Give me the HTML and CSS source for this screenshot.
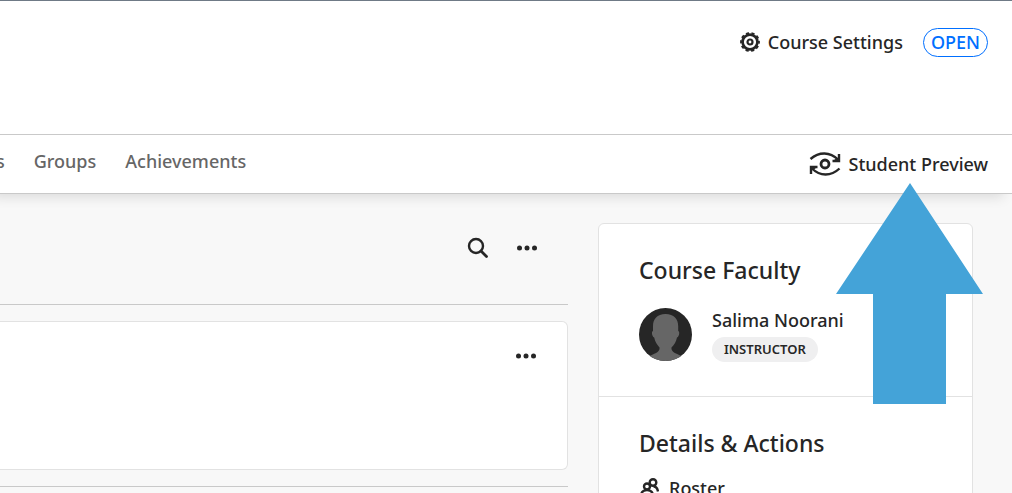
FILE: index.html
```html
<!DOCTYPE html>
<html lang="en">
<head>
<meta charset="utf-8">
<meta name="viewport" content="width=device-width, initial-scale=1">
<title>Course</title>
<link rel="stylesheet" href="styles.css">
</head>
<body>
<header class="course-header">
  <button class="action" type="button">
    <svg class="gear" viewBox="0 0 20 20" aria-hidden="true">
      <circle cx="10" cy="10" r="7.4" fill="none" stroke="currentColor" stroke-width="2.600"/>
      <circle cx="10" cy="10" r="9" fill="none" stroke="currentColor" stroke-width="1.800" stroke-dasharray="3.200 2.455" stroke-dashoffset="1.600"/>
      <circle cx="10" cy="10" r="2.500" fill="none" stroke="currentColor" stroke-width="2.200"/>
    </svg>
    Course Settings
  </button>
  <button class="status" type="button">OPEN</button>
</header>
<div class="course-bar">
  <nav class="tabs">
    <a class="tab" href="#">s</a>
    <a class="tab" href="#">Groups</a>
    <a class="tab" href="#">Achievements</a>
  </nav>
  <button class="action preview" type="button">
    <svg class="preview-icon" viewBox="0 0 32 24" fill="none" stroke="currentColor" stroke-width="2.400" aria-hidden="true">
      <path d="M1.500 7C10 -.500 21 -.500 29 7.500M30.500 16.500C22 24.500 11 24.500 3 16.500"/>
      <path d="M30 2v7h-6.500M2 22v-7h6.500"/>
      <path d="M25 8.500l5-3v3zM7 15.500l-5 3v-3z" fill="currentColor" stroke-width="1"/>
      <circle cx="16" cy="12" r="4" stroke-width="2.800"/>
    </svg>
    Student Preview
  </button>
</div>
<main class="course-body">
  <section class="content">
    <div class="toolbar">
      <button class="icon-button" type="button" aria-label="Search">
        <svg class="search" viewBox="0 0 22 22" fill="none" stroke="currentColor" aria-hidden="true">
          <circle cx="9" cy="9" r="7" stroke-width="2.400"/>
          <path d="M14 14l5.500 5.500" stroke-width="2.800" stroke-linecap="round"/>
        </svg>
      </button>
      <button class="icon-button" type="button" aria-label="More options">
        <svg class="dots" viewBox="0 0 20 6" fill="currentColor" aria-hidden="true"><circle cx="2.500" cy="3" r="2.500"/><circle cx="10" cy="3" r="2.500"/><circle cx="17.500" cy="3" r="2.500"/></svg>
      </button>
    </div>
    <article class="item">
      <button class="icon-button" type="button" aria-label="Item options">
        <svg class="dots" viewBox="0 0 20 6" fill="currentColor" aria-hidden="true"><circle cx="2.500" cy="3" r="2.500"/><circle cx="10" cy="3" r="2.500"/><circle cx="17.500" cy="3" r="2.500"/></svg>
      </button>
    </article>
    <hr class="rule">
  </section>
  <aside class="side">
    <section class="side-section">
      <h2 class="side-title">Course Faculty</h2>
      <div class="person">
        <svg class="avatar" viewBox="0 0 53 53" aria-hidden="true">
          <clipPath id="round"><circle cx="26.500" cy="26.500" r="26.500"/></clipPath>
          <g clip-path="url(#round)">
            <path d="M0 0h53v53H0z" fill="#262626"/>
            <path d="M26.500 6C18 6 14 11 14 18v5c-2 .5-.8 6 1.200 6.500C16 34 18 36.500 20.500 39.500c.5 4-3 5.500-10 8.500v8h32v-8c-7-3-10.500-4.500-10-8.500C35.500 36.500 37 34 38 29.500c2-.5 3.200-6 1.200-6.500v-5c0-7-4.200-12-12.700-12z" fill="#666"/>
          </g>
        </svg>
        <div class="person-info">
          <span class="name">Salima Noorani</span>
          <span class="role">INSTRUCTOR</span>
        </div>
      </div>
    </section>
    <section class="side-section">
      <h2 class="side-title">Details &amp; Actions</h2>
      <a class="detail" href="#">
        <svg class="people" viewBox="0 0 20 20" fill="none" stroke="currentColor" stroke-width="2.400" aria-hidden="true">
          <circle cx="8" cy="8.500" r="3"/><circle cx="14" cy="4.500" r="3.300"/>
          <path d="M2 18c0-8 12-8 12 0zM14.500 8.500c3 0 4 2 4.500 5"/>
        </svg>
        Roster
      </a>
    </section>
  </aside>
</main>
<svg class="pointer" viewBox="0 0 147 221" aria-hidden="true"><path d="M74 0l73 111h-37v110H37V111H0z" fill="#44a3d8"/></svg>
</body>
</html>
```
FILE: styles.css
```css
* { box-sizing: border-box; }
body {
  margin: 0;
  height: 100vh;
  overflow: hidden;
  position: relative;
  background: #f8f8f8;
  color: #262626;
  font: 500 18px/24px "Noto Sans", "Open Sans", sans-serif;
}
button {
  margin: 0;
  padding: 0;
  border: 0;
  background: none;
  color: inherit;
  font: inherit;
  cursor: pointer;
}
a { color: inherit; text-decoration: none; }
svg { display: block; flex: none; }
.course-header {
  display: flex;
  justify-content: flex-end;
  align-items: flex-start;
  gap: 20px;
  padding: 27px 24px 77px;
  border-top: 1px solid #6f7a86;
  border-bottom: 1px solid #c9c9c9;
  background: #fff;
}
.action {
  display: flex;
  align-items: center;
  gap: 8px;
  padding: 2px 0;
}
.gear { width: 20px; height: 20px; }
.status {
  padding: 2px 7px;
  border: 1px solid #006fff;
  border-radius: 16px;
  color: #006fff;
  line-height: 23px;
}
.course-bar {
  position: relative;
  display: flex;
  justify-content: space-between;
  align-items: center;
  padding: 14px 24px 14px 0;
  border-bottom: 1px solid #c9c9c9;
  background: #fff;
  box-shadow: -8px 3px 12px rgba(0, 0, 0, .12);
  clip-path: inset(0 0 -20px 0);
}
.tabs { display: flex; gap: 29px; padding-bottom: 6px; margin-left: -4px; }
.tab { color: #666; }
.preview-icon { width: 32px; height: 24px; }
.course-body {
  display: grid;
  grid-template-columns: minmax(0, 1fr) 375px;
  gap: 30px;
  padding: 0 39px 0 0;
}
.toolbar {
  display: flex;
  justify-content: flex-end;
  align-items: center;
  gap: 28px;
  padding: 43px 31px 45px 0;
  border-bottom: 1px solid #c9c9c9;
}
.search { width: 22px; height: 22px; }
.dots { width: 20px; height: 6px; }
.item {
  display: flex;
  justify-content: flex-end;
  align-items: flex-start;
  min-height: 149px;
  margin-top: 16px;
  padding: 31px 31px 0 0;
  border: 1px solid #e2e2e2;
  border-left: 0;
  border-radius: 0 6px 6px 0;
  background: #fff;
}
.rule { margin: 16px 0; border: 0; border-top: 1px solid #c9c9c9; }
.side {
  margin-top: 29px;
  border: 1px solid #e2e2e2;
  border-radius: 6px;
  background: #fff;
}
.side-section { padding: 30px 40px 34px; }
.side-section + .side-section { border-top: 1px solid #e2e2e2; }
.side-title { margin: 0; font-size: 23px; font-weight: 500; line-height: 32px; }
.person { display: flex; gap: 20px; margin-top: 22px; }
.avatar { width: 53px; height: 53px; }
.person-info { display: flex; flex-direction: column; align-items: flex-start; gap: 5px; }
.role {
  padding: 0 12px;
  border-radius: 13px;
  background: #efeff0;
  font-size: 13px;
  font-weight: 600;
  line-height: 25px;
}
.detail { display: flex; align-items: center; gap: 10px; margin-top: 17px; }
.people { width: 20px; height: 20px; }
.pointer { position: absolute; top: 183px; right: 29px; width: 147px; height: 221px; }
```
